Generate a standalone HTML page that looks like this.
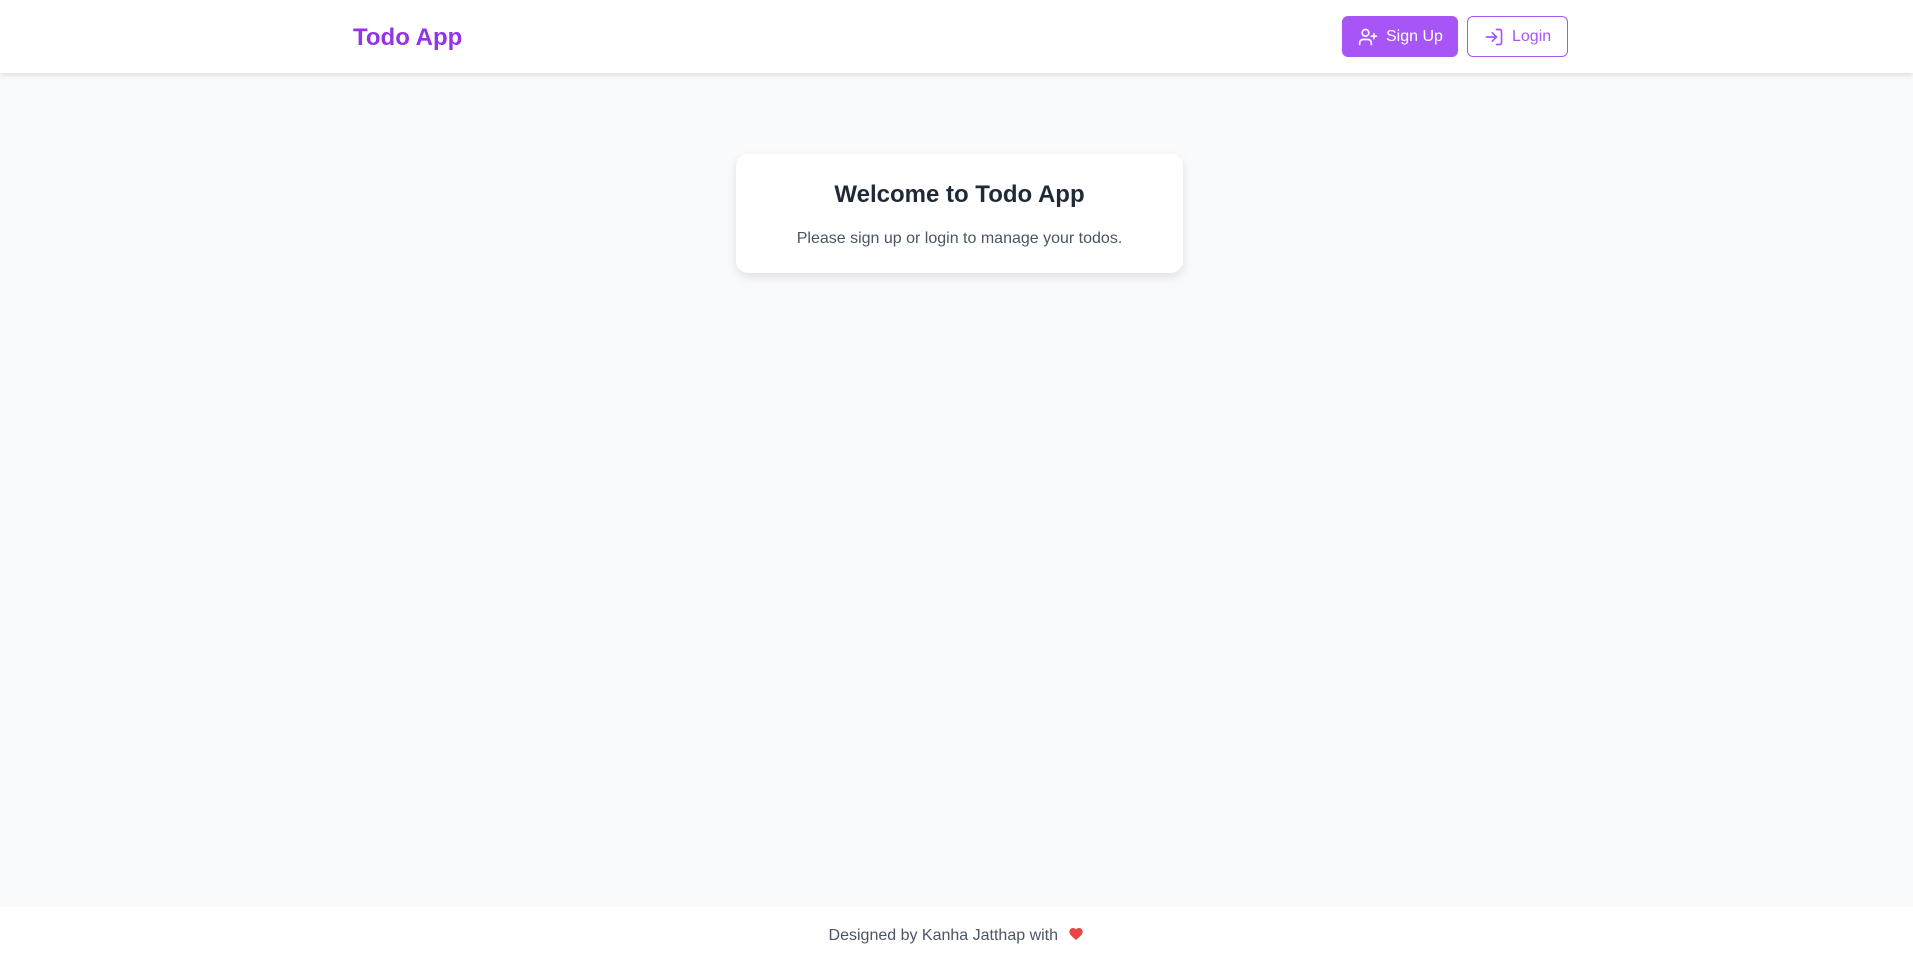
<!DOCTYPE html>
<html><head><style>
*{box-sizing:border-box;margin:0;padding:0}
body{width:1913px;height:963px;background:#f9fafb;font-family:"Liberation Sans",Arial,sans-serif;position:relative;overflow:hidden}
header{position:absolute;left:0;top:0;width:1913px;height:73px;background:#fff;box-shadow:0 2px 5px rgba(0,0,0,.12)}
.logo{position:absolute;left:353px;top:24px;font-size:24px;font-weight:bold;color:#9333ea}
.btn{position:absolute;top:16px;height:41px;border-radius:6px;font-size:16px;display:flex;align-items:center;gap:8px;padding-left:16px}
.su{left:1342px;width:116px;background:#a855f7;color:#fff}
.li{left:1467px;width:101px;border:1px solid #a855f7;color:#a855f7;background:#fff}
.card{position:absolute;left:736px;top:154px;width:447px;height:119px;background:#fff;border-radius:12px;box-shadow:0 4px 10px rgba(0,0,0,.1);text-align:center}
.card h1{font-size:24px;color:#1f2937;margin-top:27px;line-height:28px}
.card p{font-size:16px;color:#4b5563;margin-top:21px}
footer{position:absolute;left:0;top:907px;width:1913px;height:56px;background:#fff;text-align:center;font-size:16px;color:#4b5563;padding-top:19px}
</style></head><body>
<header>
<div class="logo">Todo App</div>
<div class="btn su"><svg width="20" height="20" viewBox="0 0 24 24" fill="none" stroke="#fff" stroke-width="2" stroke-linecap="round" stroke-linejoin="round"><path d="M16 21v-2a4 4 0 0 0-4-4H6a4 4 0 0 0-4 4v2"/><circle cx="9" cy="7" r="4"/><path d="M19 8v6M22 11h-6"/></svg>Sign Up</div>
<div class="btn li"><svg width="20" height="20" viewBox="0 0 24 24" fill="none" stroke="#a855f7" stroke-width="2" stroke-linecap="round" stroke-linejoin="round"><path d="M15 3h4a2 2 0 0 1 2 2v14a2 2 0 0 1-2 2h-4"/><path d="M10 17l5-5-5-5"/><path d="M15 12H3"/></svg>Login</div>
</header>
<div class="card"><h1>Welcome to Todo App</h1><p>Please sign up or login to manage your todos.</p></div>
<footer>Designed by Kanha Jatthap with <svg width="16" height="16" viewBox="0 0 24 24" style="vertical-align:-2px;margin-left:6px"><path fill="#ef4444" d="M12 21l-1.5-1.3C5 15 2 12.2 2 8.5 2 5.4 4.4 3 7.5 3c1.7 0 3.4.8 4.5 2.1C13.1 3.8 14.8 3 16.5 3 19.6 3 22 5.4 22 8.5c0 3.7-3 6.5-8.5 11.2z"/></svg></footer>
</body></html>
